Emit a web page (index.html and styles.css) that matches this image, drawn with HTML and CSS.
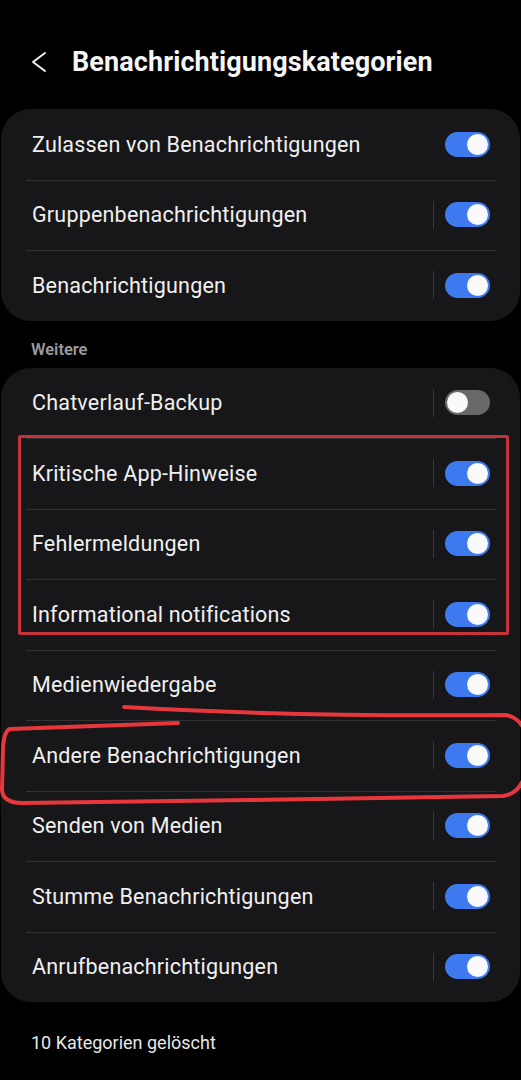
FILE: index.html
```html
<!DOCTYPE html>
<html lang="de">
<head>
<meta charset="utf-8">
<link rel="stylesheet" href="styles.css">
</head>
<body>
<div class="page">
  <header class="topbar">
    <svg class="back" width="16" height="22" viewBox="0 0 16 22"><path d="M14 2 L2 11 L14 20" fill="none" stroke="#f2f2f2" stroke-width="2" stroke-linecap="round" stroke-linejoin="round"/></svg>
    <h1 class="title">Benachrichtigungskategorien</h1>
  </header>

  <section class="card">
    <div class="row"><span class="label">Zulassen von Benachrichtigungen</span><span class="toggle on"></span></div>
    <div class="row"><span class="label">Gruppenbenachrichtigungen</span><span class="vsep"></span><span class="toggle on"></span></div>
    <div class="row"><span class="label">Benachrichtigungen</span><span class="vsep"></span><span class="toggle on"></span></div>
  </section>

  <div class="section-label">Weitere</div>

  <section class="card">
    <div class="row"><span class="label">Chatverlauf-Backup</span><span class="vsep"></span><span class="toggle"></span></div>
    <div class="row"><span class="label">Kritische App-Hinweise</span><span class="vsep"></span><span class="toggle on"></span></div>
    <div class="row"><span class="label">Fehlermeldungen</span><span class="vsep"></span><span class="toggle on"></span></div>
    <div class="row"><span class="label">Informational notifications</span><span class="vsep"></span><span class="toggle on"></span></div>
    <div class="row"><span class="label">Medienwiedergabe</span><span class="vsep"></span><span class="toggle on"></span></div>
    <div class="row"><span class="label">Andere Benachrichtigungen</span><span class="vsep"></span><span class="toggle on"></span></div>
    <div class="row"><span class="label">Senden von Medien</span><span class="vsep"></span><span class="toggle on"></span></div>
    <div class="row"><span class="label">Stumme Benachrichtigungen</span><span class="vsep"></span><span class="toggle on"></span></div>
    <div class="row"><span class="label">Anrufbenachrichtigungen</span><span class="vsep"></span><span class="toggle on"></span></div>
  </section>

  <p class="footer">10 Kategorien gelöscht</p>

  <div class="mark-rect"></div>
  <svg class="scribble" width="521" height="1080" viewBox="0 0 521 1080">
    <path d="M124 707 Q300 717 505 715 Q518 716 526 732" fill="none" stroke="#e8363d" stroke-width="4" stroke-linecap="round"/>
    <path d="M178 723 L10 729 Q4 731 3 748 L2 790 Q3 803 22 803 L250 800 L503 796 Q518 794 524 778" fill="none" stroke="#e8363d" stroke-width="4" stroke-linecap="round" stroke-linejoin="round"/>
  </svg>
</div>
</body>
</html>
```
FILE: styles.css
```css
* { box-sizing: border-box; }
html, body { margin: 0; padding: 0; background: #000; }
body {
  font-family: Roboto, "Noto Sans", "Liberation Sans", sans-serif;
  color: #f2f2f2;
}
.page {
  position: relative;
  width: 521px;
  height: 1080px;
  overflow: hidden;
}
.topbar {
  height: 109px;
  display: flex;
  align-items: center;
  padding: 15px 0 0 31px;
}
.back { flex: none; }
.title {
  margin: 0 0 0 25px;
  font-size: 27px;
  font-weight: 700;
  color: #f5f5f5;
  letter-spacing: 0.1px;
}
.card {
  margin: 0 1px;
  background: #17171a;
  border-radius: 30px;
  overflow: hidden;
}
.row {
  height: 70.5px;
  display: flex;
  align-items: center;
  padding: 0 30px 0 31px;
  position: relative;
}
.row + .row::before {
  content: "";
  position: absolute;
  top: 0;
  left: 25px;
  right: 24px;
  height: 1px;
  background: #323235;
}
.label {
  flex: 1;
  font-size: 21.5px;
  letter-spacing: 0.2px;
  color: #f0f0f0;
}
.vsep {
  width: 1px;
  height: 28px;
  background: #3a3a3d;
  margin-right: 11px;
}
.toggle {
  flex: none;
  width: 45px;
  height: 25px;
  border-radius: 13px;
  background: #68686b;
  position: relative;
}
.toggle::after {
  content: "";
  position: absolute;
  top: 2px;
  left: 2px;
  width: 21px;
  height: 21px;
  border-radius: 50%;
  background: #fafafa;
}
.toggle.on { background: #3d7af0; }
.toggle.on::after { left: 22px; }
.section-label {
  height: 47px;
  display: flex;
  align-items: center;
  padding: 10px 0 0 31px;
  font-size: 16.5px;
  font-weight: 600;
  color: #9a9a9c;
}
.footer {
  margin: 0;
  padding: 30px 0 0 31px;
  font-size: 18px;
  color: #e8e8e8;
}
.mark-rect {
  position: absolute;
  left: 18px;
  top: 435px;
  width: 491px;
  height: 200px;
  border: 3px solid #c4333a;
  border-radius: 2px;
}
.scribble {
  position: absolute;
  left: 0;
  top: 0;
  pointer-events: none;
}
```
